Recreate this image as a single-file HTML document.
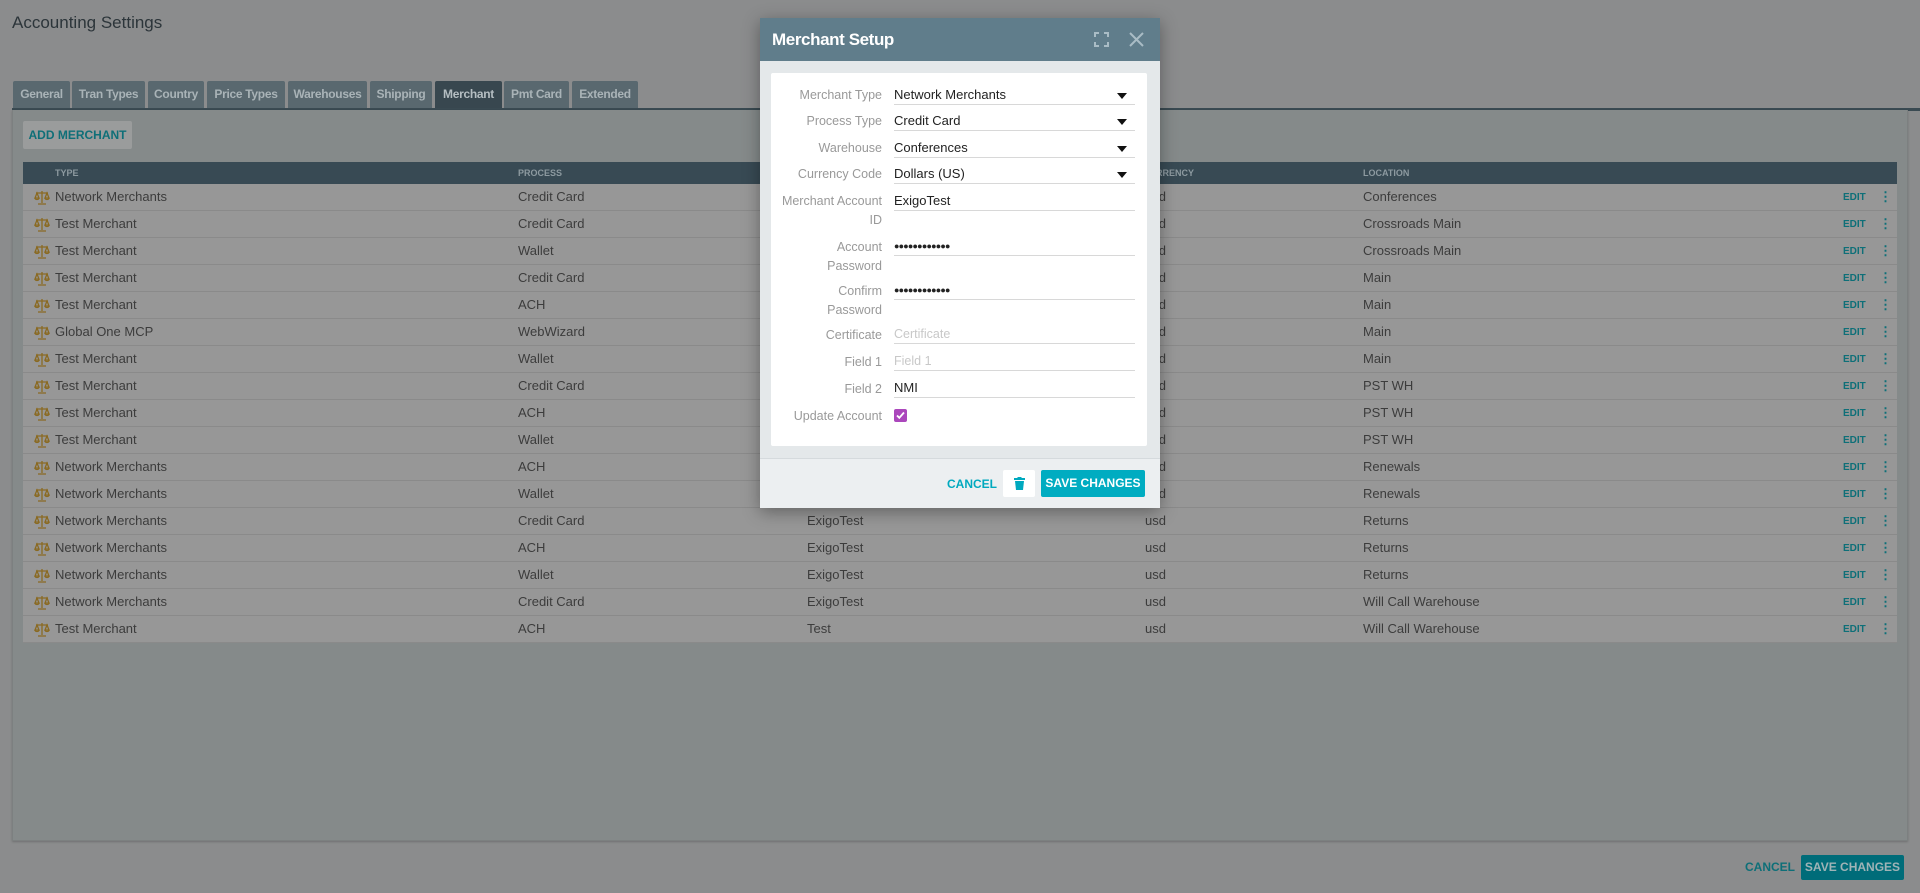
<!DOCTYPE html>
<html><head><meta charset="utf-8"><style>
*{box-sizing:border-box;margin:0;padding:0}
body{width:1920px;height:893px;background:#8b8c8d;font-family:"Liberation Sans",sans-serif;position:relative;overflow:hidden}
.a{position:absolute}
.tab{position:absolute;top:81px;height:27px;background:#59686f;color:#a9b3b7;font-size:12px;font-weight:bold;text-align:center;line-height:27px;border-radius:2px 2px 0 0;letter-spacing:-0.3px}
.row{position:absolute;left:23px;width:1874px;height:27px;background:#979797;border-bottom:1px solid #8a8a8a;font-size:13px;color:#3c3c3c;line-height:26px}
.row span{position:absolute}
.row .e{left:1820px;color:#0e6f78;font-size:10px;font-weight:bold;top:1px}
.row .d{left:1856px;color:#0e6f78;font-weight:bold}
.hd{position:absolute;top:162px;left:23px;width:1874px;height:22px;background:#384a54;color:#8d9aa0;font-size:9px;font-weight:bold;line-height:22px}
.hd span{position:absolute}
.lbl{position:absolute;right:0;width:140px;text-align:right;color:#999;font-size:12.5px;line-height:19px}
.inp{position:absolute;left:894px;width:241px;border-bottom:1px solid #d8d8d8;font-size:13px;color:#222;height:20px;line-height:20px}
.arr{position:absolute;right:8px;top:8px;width:0;height:0;border-left:5px solid transparent;border-right:5px solid transparent;border-top:6px solid #111}
</style></head><body>
<div class="a" style="left:12px;top:13px;font-size:17px;color:#2c353a">Accounting Settings</div>

<div class="tab" style="left:13px;width:57px">General</div>
<div class="tab" style="left:72px;width:73px">Tran Types</div>
<div class="tab" style="left:148px;width:56px">Country</div>
<div class="tab" style="left:207px;width:78px">Price Types</div>
<div class="tab" style="left:288px;width:79px">Warehouses</div>
<div class="tab" style="left:370px;width:62px">Shipping</div>
<div class="tab" style="left:435px;width:67px;background:#38474f;color:#b5bec2">Merchant</div>
<div class="tab" style="left:504px;width:65px">Pmt Card</div>
<div class="tab" style="left:572px;width:66px">Extended</div>

<div class="a" style="left:12px;top:108px;width:1908px;height:3px;background:#3a4a52"></div>
<div class="a" style="left:12px;top:110px;width:1896px;height:731px;background:#858a8a;border:1px solid #7c8080;border-top:none;box-shadow:0 1px 2px rgba(0,0,0,.2)"></div>
<div class="a" style="left:23px;top:121px;width:109px;height:28px;background:#9a9c9c;border-radius:2px;color:#0e6f78;font-size:12px;font-weight:bold;line-height:28px;text-align:center">ADD MERCHANT</div>

<div class="hd"><span style="left:32px">TYPE</span><span style="left:495px">PROCESS</span><span style="left:1120px">CURRENCY</span><span style="left:1340px">LOCATION</span></div>

<div id="rows"></div>

<div class="a" style="left:1745px;top:860px;color:#0e6f78;font-size:12px;font-weight:bold">CANCEL</div>
<div class="a" style="left:1801px;top:855px;width:103px;height:25px;background:#006c79;border-radius:2px;color:#9fb3b6;font-size:12px;font-weight:bold;line-height:25px;text-align:center">SAVE CHANGES</div>

<div class="a" style="left:760px;top:18px;width:400px;height:490px;background:#e4e8ea;box-shadow:0 4px 16px rgba(0,0,0,.35)">
 <div class="a" style="left:0;top:0;width:400px;height:43px;background:#607d8b"></div>
 <div class="a" style="left:12px;top:12px;color:#fff;font-size:17px;font-weight:bold;letter-spacing:-0.4px">Merchant Setup</div>
 <svg class="a" style="left:334px;top:14px" width="15" height="15" viewBox="0 0 15 15" fill="none" stroke="#a9bcc5" stroke-width="2"><path d="M1 5V1h4M10 1h4v4M14 10v4h-4M5 14H1v-4"/></svg>
 <svg class="a" style="left:369px;top:14px" width="15" height="15" viewBox="0 0 15 15" stroke="#a9bcc5" stroke-width="2"><path d="M1 1l13 13M14 1L1 14"/></svg>
 <div class="a" style="left:11px;top:55px;width:376px;height:373px;background:#fff;border-radius:2px"></div>
 <div class="a" style="left:0;top:440px;width:400px;height:50px;background:#eceff1;border-top:1px solid #d5dadd"></div>
 <div class="a" style="left:187px;top:459px;color:#00a9bf;font-size:12px;font-weight:bold">CANCEL</div>
 <div class="a" style="left:243px;top:452px;width:32px;height:27px;background:#fff;border-radius:2px"></div>
 <svg class="a" style="left:254px;top:459px" width="11" height="13" viewBox="0 0 11 13" fill="#00a9bf"><rect x="0" y="1" width="11" height="2"/><rect x="3.5" y="0" width="4" height="2"/><path d="M1 4h9l-1 9H2z"/></svg>
 <div class="a" style="left:281px;top:452px;width:104px;height:27px;background:#00acc1;border-radius:2px;color:#fff;font-size:12px;font-weight:bold;line-height:27px;text-align:center">SAVE CHANGES</div>
</div>

<div class="a" style="left:742px;top:0;width:140px;height:893px">
 <div class="lbl" style="top:86px">Merchant Type</div>
 <div class="lbl" style="top:112px">Process Type</div>
 <div class="lbl" style="top:139px">Warehouse</div>
 <div class="lbl" style="top:165px">Currency Code</div>
 <div class="lbl" style="top:192px">Merchant Account<br>ID</div>
 <div class="lbl" style="top:238px">Account<br>Password</div>
 <div class="lbl" style="top:282px">Confirm<br>Password</div>
 <div class="lbl" style="top:326px">Certificate</div>
 <div class="lbl" style="top:353px">Field 1</div>
 <div class="lbl" style="top:380px">Field 2</div>
 <div class="lbl" style="top:407px">Update Account</div>
</div>
<div class="inp" style="top:85px">Network Merchants<i class="arr"></i></div>
<div class="inp" style="top:111px">Credit Card<i class="arr"></i></div>
<div class="inp" style="top:138px">Conferences<i class="arr"></i></div>
<div class="inp" style="top:164px">Dollars (US)<i class="arr"></i></div>
<div class="inp" style="top:191px">ExigoTest</div>
<div class="inp" style="top:236px;font-size:9px;letter-spacing:-0.8px">●●●●●●●●●●●●</div>
<div class="inp" style="top:280px;font-size:9px;letter-spacing:-0.8px">●●●●●●●●●●●●</div>
<div class="inp" style="top:324px;color:#c8c8c8;font-size:12.5px">Certificate</div>
<div class="inp" style="top:351px;color:#c8c8c8;font-size:12.5px">Field 1</div>
<div class="inp" style="top:378px">NMI</div>
<div class="a" style="left:894px;top:409px;width:13px;height:13px;background:#ab47bc;border-radius:2px"></div>
<svg class="a" style="left:896px;top:411px" width="9" height="9" viewBox="0 0 9 9" fill="none" stroke="#fff" stroke-width="1.8"><path d="M1 4.5l2.3 2.3L8 1.5"/></svg>

<script>
var d=[["Network Merchants","Credit Card","","","Conferences"],["Test Merchant","Credit Card","","","Crossroads Main"],["Test Merchant","Wallet","","","Crossroads Main"],["Test Merchant","Credit Card","","","Main"],["Test Merchant","ACH","","","Main"],["Global One MCP","WebWizard","","","Main"],["Test Merchant","Wallet","","","Main"],["Test Merchant","Credit Card","","","PST WH"],["Test Merchant","ACH","","","PST WH"],["Test Merchant","Wallet","","","PST WH"],["Network Merchants","ACH","","","Renewals"],["Network Merchants","Wallet","","","Renewals"],["Network Merchants","Credit Card","ExigoTest","usd","Returns"],["Network Merchants","ACH","ExigoTest","usd","Returns"],["Network Merchants","Wallet","ExigoTest","usd","Returns"],["Network Merchants","Credit Card","ExigoTest","usd","Will Call Warehouse"],["Test Merchant","ACH","Test","usd","Will Call Warehouse"]];
var ic='<svg style="position:absolute;left:11px;top:6px" width="16" height="15" viewBox="0 0 16 15" fill="none" stroke="#8a6a22" stroke-width="1.3"><path d="M8 1v12M4 14h8M2 3h12M3 3L1 8h4zM13 3l-2 5h4z"/><path d="M1 8a2 1.5 0 0 0 4 0M11 8a2 1.5 0 0 0 4 0"/></svg>';
var h='';d.forEach(function(r,i){var t=184+i*27;h+='<div class="row" style="top:'+t+'px">'+ic+'<span style="left:32px">'+r[0]+'</span><span style="left:495px">'+r[1]+'</span><span style="left:784px">'+r[2]+'</span><span style="left:1122px">'+(r[3]||"usd")+'</span><span style="left:1340px">'+r[4]+'</span><span class="e">EDIT</span><span class="d">&#8942;</span></div>';});
document.getElementById('rows').innerHTML=h;
</script>
</body></html>
